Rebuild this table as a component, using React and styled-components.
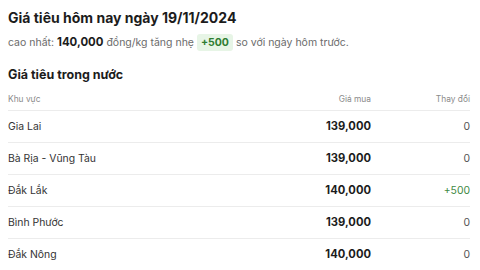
import styled, { createGlobalStyle } from "styled-components";

const GlobalStyle = createGlobalStyle`
  body {
    margin: 0;
    background: #ffffff;
    font-family: Inter, "Noto Sans", sans-serif;
    color: #1f1f1f;
  }
`;

const Page = styled.div`
  padding: 8px 10px 0 8px;
`;

const Title = styled.h1`
  margin: 0;
  font-size: 14px;
  line-height: 20px;
  font-weight: 700;
  color: #1c1c1c;
`;

const Summary = styled.p`
  margin: 5px 0 0 0;
  font-size: 10.5px;
  line-height: 18px;
  color: #6b6b6b;
  white-space: pre;
`;

const Strong = styled.b`
  font-weight: 700;
  font-size: 11.4px;
  color: #1c1c1c;
`;

const Badge = styled.span`
  display: inline-block;
  padding: 0 4px;
  background: #e7f5e6;
  border-radius: 3px;
  color: #2f7d32;
  font-weight: 700;
  font-size: 10.5px;
  line-height: 17px;
`;

const Section = styled.h2`
  margin: 14px 0 0 0;
  font-size: 12.5px;
  line-height: 18px;
  font-weight: 700;
  color: #1c1c1c;
`;

const Table = styled.div`
  margin-top: 4px;
  display: grid;
  grid-template-columns: 1fr 110px 99px;
`;

const HeadCell = styled.div`
  font-size: 8.4px;
  line-height: 11px;
  color: #8a8a8a;
  padding: 6px 0 5px 0;
  text-align: ${(p) => (p.$right ? "right" : "left")};
  border-bottom: 1px solid #ececec;
`;

const Cell = styled.div`
  line-height: 15px;
  padding: 8px 0 8px 0;
  border-bottom: 1px solid #ececec;
  text-align: ${(p) => (p.$right ? "right" : "left")};
  color: ${(p) => p.$color || "#333333"};
  font-weight: ${(p) => (p.$bold ? 700 : 400)};
  font-size: ${(p) => (p.$bold ? "11.2px" : "10.4px")};
`;

const rows = [
  { region: "Gia Lai", price: "139,000", change: "0" },
  { region: "Bà Rịa - Vũng Tàu", price: "139,000", change: "0" },
  { region: "Đắk Lắk", price: "140,000", change: "+500" },
  { region: "Bình Phước", price: "139,000", change: "0" },
  { region: "Đắk Nông", price: "140,000", change: "0" },
];

export default function App() {
  return (
    <>
      <GlobalStyle />
      <Page>
        <Title>Giá tiêu hôm nay ngày 19/11/2024</Title>
        <Summary>
          cao nhất: <Strong>140,000</Strong> đồng/kg tăng nhẹ <Badge>+500</Badge>{" "}
          so với ngày hôm trước.
        </Summary>
        <Section>Giá tiêu trong nước</Section>
        <Table>
          <HeadCell>Khu vực</HeadCell>
          <HeadCell $right>Giá mua</HeadCell>
          <HeadCell $right>Thay đổi</HeadCell>
          {rows.map((r) => [
            <Cell key={r.region + "a"}>{r.region}</Cell>,
            <Cell key={r.region + "b"} $right $bold $color="#1c1c1c">
              {r.price}
            </Cell>,
            <Cell
              key={r.region + "c"}
              $right
              $color={r.change === "0" ? "#555555" : "#3f8a45"}
            >
              {r.change}
            </Cell>,
          ])}
        </Table>
      </Page>
    </>
  );
}
